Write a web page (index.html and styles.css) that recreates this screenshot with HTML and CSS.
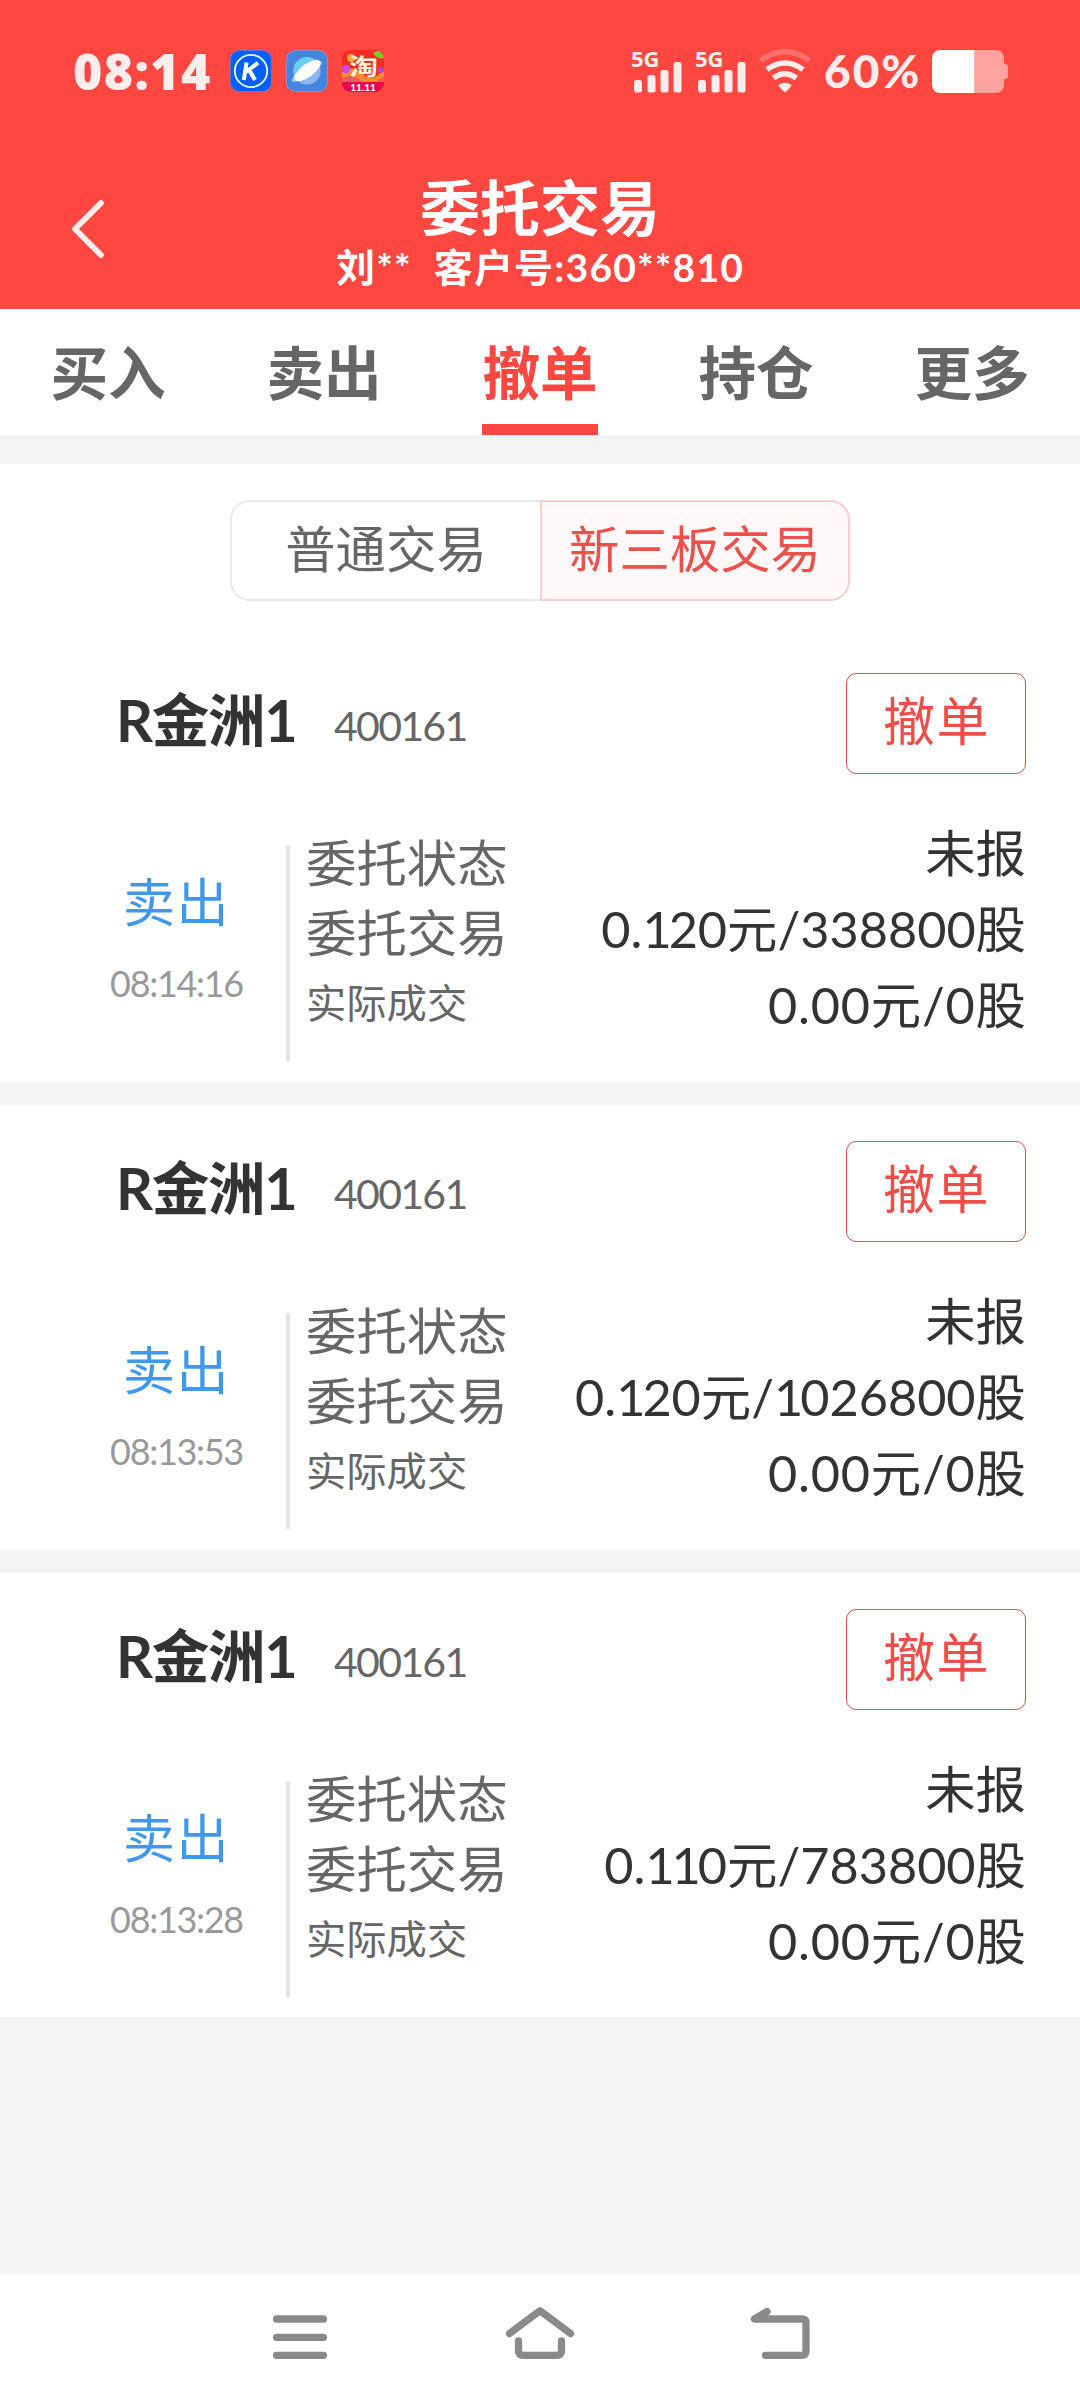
FILE: index.html
```html
<!DOCTYPE html>
<html lang="zh-CN">
<head>
<meta charset="utf-8">
<title>委托交易</title>
<link rel="stylesheet" href="styles.css">
</head>
<body>
<header class="header">
  <div class="status">
    <span class="clock">08:14</span>
    <svg class="app" viewBox="0 0 42 42"><rect x=".5" y=".5" width="41" height="41" rx="9" fill="#0560fa" stroke="#5a78dc"/><circle cx="21" cy="21" r="16.2" fill="none" stroke="#e9fbff" stroke-width="1.8"/><path d="M16.500 12.500 13.800 30M28 12.800 16 22M19.500 20.500 25 30" fill="none" stroke="#fff" stroke-width="4"/></svg>
    <svg class="app" viewBox="0 0 42 42"><rect x=".5" y=".5" width="41" height="41" rx="9" fill="#4585e2" stroke="#8b90cc"/><circle cx="21" cy="21" r="13.6" fill="#8cb6ef"/><path d="M8 25A13.600 13.600 0 0 1 31 11.500z" fill="#68cff4"/><path d="M9 24Q4 31 7 32Q15 32 25 25.500Q35 18 36 12.500Q36 9.500 29 11.500z" fill="#a6c5f3"/><ellipse cx="21.500" cy="20.500" rx="15.500" ry="6.500" transform="rotate(-37 21.500 20.500)" fill="#fff"/></svg>
    <svg class="app" viewBox="0 0 42 42"><defs><clipPath id="tile"><rect width="42" height="42" rx="9"/></clipPath></defs><g clip-path="url(#tile)"><rect width="42" height="42" fill="#f52a20"/><path d="M0 22Q12 14 21 24T42 19V34H0z" fill="#ff8a26"/><path d="M0 28Q11 23 19 31T42 26V34H0z" fill="#ef5b62"/><circle cx="9" cy="8" r="4" fill="#ffad38"/><circle cx="4" cy="19" r="4" fill="#c54bea"/><path d="M31 3q7-4 11-1v6q-7 2-11-5z" fill="#7acb24"/><circle cx="39" cy="20" r="3" fill="#a84ae0"/><path d="M0 32h42v10H0z" fill="#e8064e"/></g><text class="tao" x="17.200" y="25" text-anchor="middle" transform="scale(1.25 1)">淘</text><text class="sale" x="21" y="41" text-anchor="middle">11.11</text></svg>
    <div class="cell"><span>5G</span><svg viewBox="0 0 36 31"><g fill="#ffeced"><rect y="18" width="8" height="12.500" rx="2.500"/><rect x="13.500" y="13" width="8" height="17.500" rx="2.500"/><rect x="26.500" y="8" width="8" height="22.500" rx="2.500"/><rect x="39.500" y="0" width="8" height="30.500" rx="2.500"/></g></svg></div>
    <div class="cell"><span>5G</span><svg viewBox="0 0 36 31"><g fill="#ffeced"><rect y="18" width="8" height="12.500" rx="2.500"/><rect x="13.500" y="13" width="8" height="17.500" rx="2.500"/><rect x="26.500" y="8" width="8" height="22.500" rx="2.500"/><rect x="39.500" y="0" width="8" height="30.500" rx="2.500"/></g></svg></div>
    <svg class="wifi" viewBox="0 0 52 44"><g fill="none" stroke="#ffeced" stroke-width="5.500"><path d="M1.500 11.500Q26-6 50.500 11.500" stroke="#ff716e"/><path d="M8 20.500Q26 7.500 44 20.500"/><path d="M14.500 29Q26 20.500 37.500 29"/></g><path d="M19.500 36Q26 31.500 32.500 36Q33 37 26 43.500Q19 37 19.500 36z" fill="#ffeced"/></svg>
    <span class="percent">60%</span>
    <svg class="battery" viewBox="0 0 76 43"><path d="M9 0H42.600V43H9Q0 43 0 34V9Q0 0 9 0z" fill="#fff"/><path d="M42.600 0H63Q72 0 72 9V13.500Q76 14 76 18V26Q76 29 72 29.500V34Q72 43 63 43H42.600z" fill="#ffa3a1"/></svg>
  </div>
  <div class="titlebar">
    <svg class="back" viewBox="0 0 36 60"><path d="M32 4 6 30 32 56" fill="none" stroke="#ffeeed" stroke-width="5.800" stroke-linecap="round" stroke-linejoin="round"/></svg>
    <div class="titles">
      <h1 class="title">委托交易</h1>
      <div class="account"><span>刘**</span><span>客户号:360**810</span></div>
    </div>
  </div>
</header>
<nav class="tabs">
  <a class="tab"><span>买入</span></a>
  <a class="tab"><span>卖出</span></a>
  <a class="tab active"><span>撤单</span></a>
  <a class="tab"><span>持仓</span></a>
  <a class="tab"><span>更多</span></a>
</nav>
<main class="content">
  <div class="switcher">
    <div class="segment">普通交易</div>
    <div class="segment on">新三板交易</div>
  </div>
  <section class="order">
    <div class="order-head"><span class="name">R金洲1</span><span class="code">400161</span><button class="cancel">撤单</button></div>
    <div class="order-body">
      <div class="side"><span class="action">卖出</span><span class="time">08:14:16</span></div>
      <div class="labels"><span>委托状态</span><span>委托交易</span><span class="small">实际成交</span></div>
      <div class="values"><span>未报</span><span>0.<i>1</i>20元/338800股</span><span class="dealt">0.00元/0股</span></div>
    </div>
  </section>
  <section class="order">
    <div class="order-head"><span class="name">R金洲1</span><span class="code">400161</span><button class="cancel">撤单</button></div>
    <div class="order-body">
      <div class="side"><span class="action">卖出</span><span class="time">08:13:53</span></div>
      <div class="labels"><span>委托状态</span><span>委托交易</span><span class="small">实际成交</span></div>
      <div class="values"><span>未报</span><span>0.<i>1</i>20元/<i>1</i>026800股</span><span class="dealt">0.00元/0股</span></div>
    </div>
  </section>
  <section class="order">
    <div class="order-head"><span class="name">R金洲1</span><span class="code">400161</span><button class="cancel">撤单</button></div>
    <div class="order-body">
      <div class="side"><span class="action">卖出</span><span class="time">08:13:28</span></div>
      <div class="labels"><span>委托状态</span><span>委托交易</span><span class="small">实际成交</span></div>
      <div class="values"><span>未报</span><span>0.<i>11</i>0元/783800股</span><span class="dealt">0.00元/0股</span></div>
    </div>
  </section>
</main>
<footer class="sysnav">
  <svg viewBox="0 0 80 60"><path d="M16.500 15h47M16.500 33.300h47M16.500 51.300h47"/></svg>
  <svg viewBox="0 0 80 60"><path d="M8.500 29.500 40 6.700 71.500 29.500" transform="translate(1.200 0) scale(.97 1)"/><path d="M18.500 37V47Q18.500 51.300 24 51.300H56Q61.500 51.300 61.500 47V37"/></svg>
  <svg viewBox="0 0 80 60"><path d="M27 7.500 14.500 15H62Q66 15 66 19V47Q66 51.300 62 51.300H25.500"/></svg>
</footer>
</body>
</html>
```
FILE: styles.css
```css
* { box-sizing: border-box; }
body {
  margin: 0;
  width: 1080px;
  height: 2400px;
  display: flex;
  flex-direction: column;
  background: #f4f4f4;
  color: #333;
  font-family: Lato, "Noto Sans CJK SC", sans-serif;
  overflow: hidden;
}
svg { display: block; flex: none; }
.header { height: 309px; background: #ff4742; color: #fff; }
.status {
  height: 142px;
  padding-left: 73px;
  display: flex;
  align-items: center;
  color: #ffeced;
}
.clock {
  width: 157px;
  font: 800 50px/60px "Open Sans", sans-serif;
  letter-spacing: 1.400px;
}
.app { width: 42px; height: 42px; margin-right: 14px; overflow: visible; }
.tao { font: 700 23px "Noto Sans CJK SC", sans-serif; fill: #fff3d8; }
.sale { font: 900 10px Lato, sans-serif; fill: #fff; }
.cell {
  width: 52px;
  height: 44px;
  margin-right: 12px;
  display: grid;
}
.app + .cell { margin-left: 233px; }
.cell span {
  grid-area: 1 / 1;
  font: 700 22px/18px "Open Sans", sans-serif;
}
.cell svg {
  grid-area: 1 / 1;
  align-self: end;
  width: 36px;
  height: 31px;
  margin-left: 2.500px;
  overflow: visible;
}
.wifi { width: 52px; height: 44px; }
.percent {
  width: 121px;
  padding-left: 13px;
  font: 900 46px/60px Lato, sans-serif;
  letter-spacing: 2px;
}
.battery { width: 76px; height: 43px; }
.titlebar {
  height: 167px;
  display: grid;
  grid-template-columns: 180px 1fr 180px;
}
.back { width: 36px; height: 60px; margin: 57px 0 0 69px; }
.titles { padding-top: 31px; text-align: center; }
.title { margin: 0; font-size: 60px; line-height: 70px; font-weight: 700; }
.account {
  display: flex;
  justify-content: center;
  gap: 22px;
  font-size: 39px;
  line-height: 48px;
  font-weight: 700;
  letter-spacing: 1.200px;
}
.tabs {
  height: 126px;
  display: grid;
  grid-template-columns: repeat(5, 1fr);
  background: #fff;
}
.tab {
  display: flex;
  justify-content: center;
  color: #666;
  font-size: 57.600px;
  line-height: 128px;
  font-weight: 700;
}
.tab span { width: 116px; height: 126px; text-align: center; }
.active { color: #ff4742; }
.active span { border-bottom: 11px solid #ff4742; }
.content { margin-top: 29px; padding-top: 36px; background: #fff; }
.switcher {
  width: 620px;
  height: 101px;
  margin: 0 auto 36px;
  display: grid;
  grid-template-columns: 1fr 1fr;
}
.segment {
  border: 2px solid #e9e9e9;
  border-right: 0;
  border-radius: 20px 0 0 20px;
  color: #666;
  font-size: 50.400px;
  line-height: 94px;
  text-align: center;
}
.on {
  border: 2px solid #f7cfcf;
  border-radius: 0 20px 20px 0;
  background: #fff8f8;
  color: #ec504b;
}
.order { height: 445px; padding: 36px 54px 0 108px; }
.order + .order { height: 468px; border-top: 23px solid #f4f4f4; }
.order:last-child { height: 467px; }
.order-head { height: 101px; display: flex; align-items: center; }
.name {
  width: 226px;
  padding-left: 8px;
  font-size: 57.600px;
  line-height: 100px;
  font-weight: 700;
  letter-spacing: -1.300px;
  margin-top: -8px;
}
.code { color: #666; font-size: 41px; letter-spacing: -1.700px; margin-top: 3px; }
.cancel {
  width: 180px;
  height: 101px;
  margin-left: auto;
  padding: 0 0 6px 1px;
  border: 1.500px solid #d5524e;
  border-radius: 10px;
  background: #fff;
  color: #f04d48;
  font: 400 52px/1 Lato, "Noto Sans CJK SC", sans-serif;
  letter-spacing: 1.500px;
}
.order-body { height: 308px; display: flex; }
.side {
  width: 182px;
  height: 216px;
  margin-top: 71px;
  padding: 17px 41px 0 0;
  border-right: 4px solid #e5e5e5;
  display: flex;
  flex-direction: column;
  align-items: center;
  white-space: nowrap;
}
.action { color: #4098ec; font-size: 52px; line-height: 80px; letter-spacing: 1.500px; }
.time { color: #999; font-size: 36px; line-height: 82px; letter-spacing: -1.300px; }
.labels {
  padding: 54px 0 0 16px;
  display: flex;
  flex-direction: column;
  color: #666;
  font-size: 50.400px;
  line-height: 70px;
}
.labels .small { font-size: 40.300px; }
.values {
  margin-left: auto;
  padding-top: 41px;
  display: flex;
  flex-direction: column;
  text-align: right;
  font-size: 50.400px;
  line-height: 76px;
}
.values i { font-style: normal; letter-spacing: -3px; }
.values .dealt { letter-spacing: .800px; margin-right: -.800px; }
.sysnav {
  height: 126px;
  margin-top: auto;
  padding: 30px 180px 0;
  display: grid;
  grid-template-columns: repeat(3, 1fr);
  justify-items: center;
  background: #fff;
}
.sysnav svg {
  width: 80px;
  height: 60px;
  fill: none;
  stroke: #8a8a8a;
  stroke-width: 7.300px;
  stroke-linecap: round;
  stroke-linejoin: round;
  overflow: visible;
}
```
